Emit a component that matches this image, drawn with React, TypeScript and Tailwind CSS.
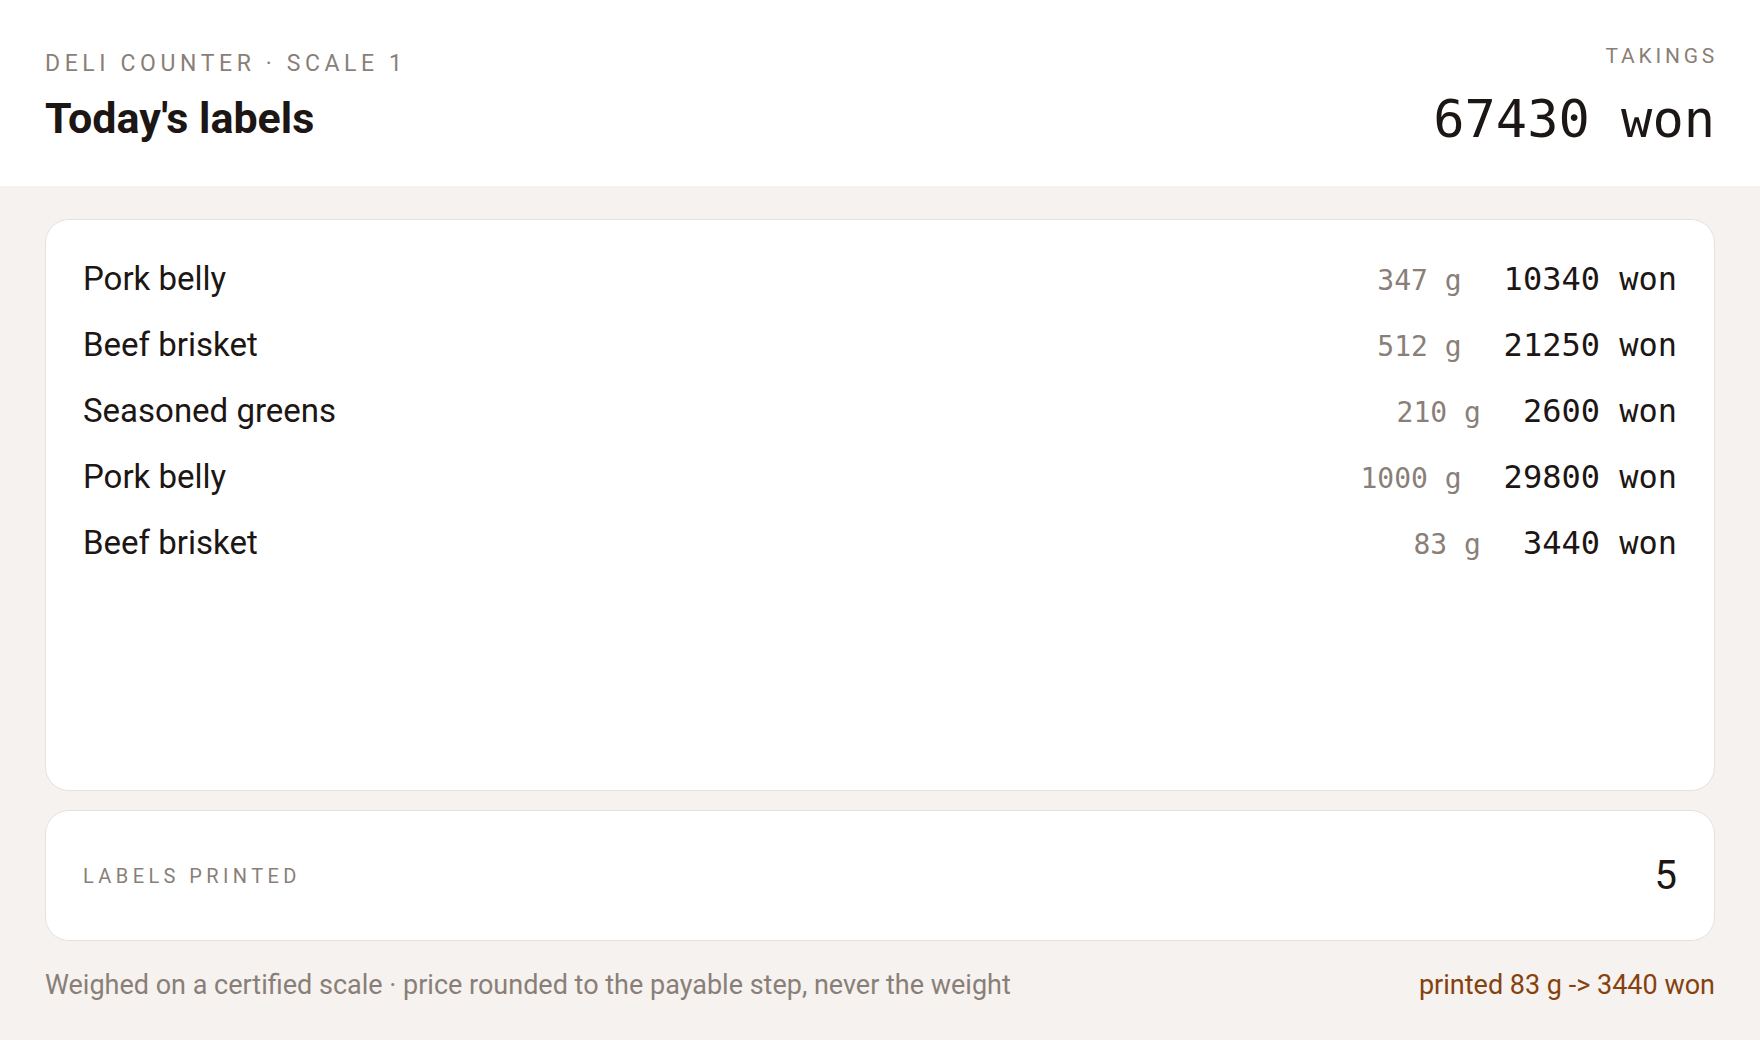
import React from "react";

const rows = [
  { name: "Pork belly", weight: "347 g", price: "10340 won" },
  { name: "Beef brisket", weight: "512 g", price: "21250 won" },
  { name: "Seasoned greens", weight: "210 g", price: "2600 won" },
  { name: "Pork belly", weight: "1000 g", price: "29800 won" },
  { name: "Beef brisket", weight: "83 g", price: "3440 won" },
];

const sans = "font-['Roboto','Liberation_Sans',sans-serif]";
const mono = "font-['DejaVu_Sans_Mono','Liberation_Mono',monospace]";

export default function App() {
  return (
    <div className={`h-[1040px] w-full flex flex-col bg-[#f5f2ef] ${sans}`}>
      <header className="h-[186px] shrink-0 bg-white px-[45px] flex justify-between items-start">
        <div className="pt-[49px] flex flex-col">
          <div className="text-[23px] leading-[30px] tracking-[0.2em] text-[#8a7f78] uppercase">
            Deli counter · Scale 1
          </div>
          <h1 className="mt-[14px] text-[43px] leading-[50px] font-bold text-[#1c1614]">
            Today's labels
          </h1>
        </div>
        <div className="pt-[42px] flex flex-col items-end">
          <div className="text-[21px] leading-[28px] tracking-[0.18em] text-[#8a7f78] -mr-[3px]">
            TAKINGS
          </div>
          <div className={`mt-[17px] text-[52px] leading-[64px] text-[#1c1614] ${mono}`}>
            67430 won
          </div>
        </div>
      </header>

      <main className="flex-1 flex flex-col px-[45px] pt-[33px] pb-[37px]">
        <section className="flex-1 bg-white border border-[#e8e2dc] rounded-[24px] px-[37px] pt-[26px]">
          {rows.map((r, i) => (
            <div key={i} className="flex items-baseline justify-between">
              <span className="text-[33px] leading-[66px] text-[#1c1614]">{r.name}</span>
              <div className="flex items-baseline gap-[42px]">
                <span className={`text-[28px] text-[#8a7f78] ${mono}`}>{r.weight}</span>
                <span className={`text-[32px] text-[#1c1614] ${mono}`}>{r.price}</span>
              </div>
            </div>
          ))}
        </section>

        <section className="mt-[19px] h-[131px] shrink-0 bg-white border border-[#e8e2dc] rounded-[24px] px-[37px] flex items-center justify-between">
          <span className="text-[20px] tracking-[0.22em] text-[#8a7f78]">LABELS PRINTED</span>
          <span className="text-[40px] text-[#1c1614]">5</span>
        </section>

        <footer className="mt-[26px] h-[36px] shrink-0 flex items-center justify-between text-[27px]">
          <span className="text-[#8a7f78]">
            Weighed on a certified scale · price rounded to the payable step, never the weight
          </span>
          <span className="text-[#85420f]">printed 83 g -&gt; 3440 won</span>
        </footer>
      </main>
    </div>
  );
}
